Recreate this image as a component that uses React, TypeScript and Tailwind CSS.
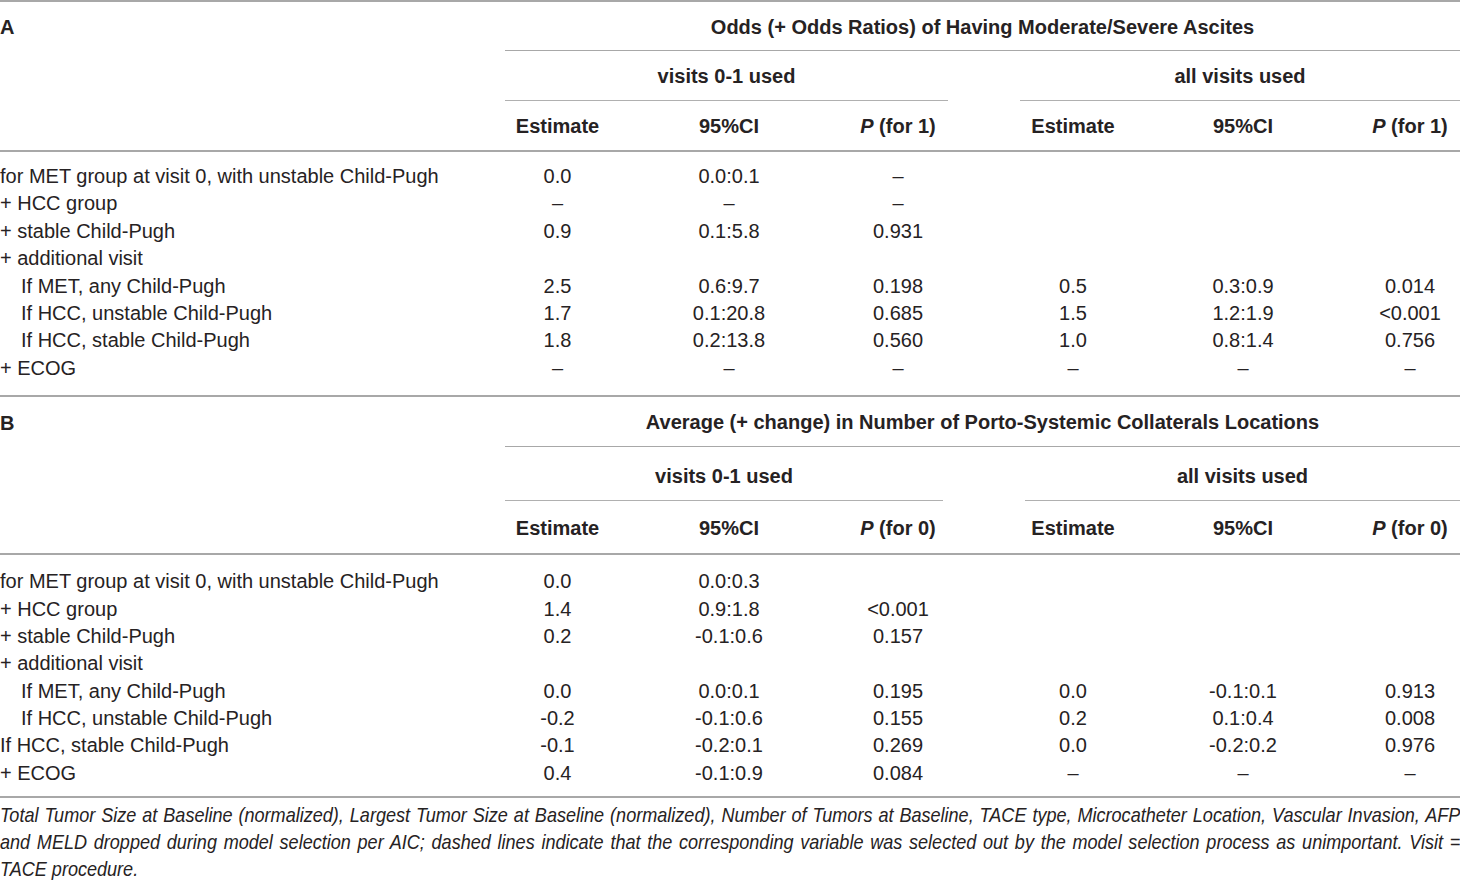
import React from 'react';

type Row = { label: string; indent?: boolean; cells: string[] };

const cols = 'grid grid-cols-[505px_105px_238px_100px_72px_106px_234px_100px]';

const rowsA: Row[] = [
  { label: 'for MET group at visit 0, with unstable Child-Pugh', cells: ['0.0', '0.0:0.1', '–', '', '', ''] },
  { label: '+ HCC group', cells: ['–', '–', '–', '', '', ''] },
  { label: '+ stable Child-Pugh', cells: ['0.9', '0.1:5.8', '0.931', '', '', ''] },
  { label: '+ additional visit', cells: ['', '', '', '', '', ''] },
  { label: 'If MET, any Child-Pugh', indent: true, cells: ['2.5', '0.6:9.7', '0.198', '0.5', '0.3:0.9', '0.014'] },
  { label: 'If HCC, unstable Child-Pugh', indent: true, cells: ['1.7', '0.1:20.8', '0.685', '1.5', '1.2:1.9', '<0.001'] },
  { label: 'If HCC, stable Child-Pugh', indent: true, cells: ['1.8', '0.2:13.8', '0.560', '1.0', '0.8:1.4', '0.756'] },
  { label: '+ ECOG', cells: ['–', '–', '–', '–', '–', '–'] },
];

const rowsB: Row[] = [
  { label: 'for MET group at visit 0, with unstable Child-Pugh', cells: ['0.0', '0.0:0.3', '', '', '', ''] },
  { label: '+ HCC group', cells: ['1.4', '0.9:1.8', '<0.001', '', '', ''] },
  { label: '+ stable Child-Pugh', cells: ['0.2', '-0.1:0.6', '0.157', '', '', ''] },
  { label: '+ additional visit', cells: ['', '', '', '', '', ''] },
  { label: 'If MET, any Child-Pugh', indent: true, cells: ['0.0', '0.0:0.1', '0.195', '0.0', '-0.1:0.1', '0.913'] },
  { label: 'If HCC, unstable Child-Pugh', indent: true, cells: ['-0.2', '-0.1:0.6', '0.155', '0.2', '0.1:0.4', '0.008'] },
  { label: 'If HCC, stable Child-Pugh', cells: ['-0.1', '-0.2:0.1', '0.269', '0.0', '-0.2:0.2', '0.976'] },
  { label: '+ ECOG', cells: ['0.4', '-0.1:0.9', '0.084', '–', '–', '–'] },
];

function Rule() {
  return <div className="h-[2px] w-full bg-[#a8a8a8]" />;
}

function Head({ text }: { text: string }) {
  if (text.startsWith('P ')) {
    return (
      <div className="text-center">
        <span className="italic">P</span> {text.slice(2)}
      </div>
    );
  }
  return <div className="text-center">{text}</div>;
}

function Section({
  letter,
  title,
  p,
  rows,
  b,
}: {
  letter: string;
  title: string;
  p: string;
  rows: Row[];
  b: boolean;
}) {
  const heads = ['Estimate', '95%CI', 'P ' + p];
  return (
    <div>
      <div className={`${cols} font-bold`}>
        <div className={`flex items-center pt-[1px] ${b ? 'h-[50px]' : 'h-[49px]'}`}>{letter}</div>
        <div className={`col-span-7 flex items-center justify-center border-b border-[#a8a8a8] pt-[1px] ${b ? 'h-[50px]' : 'h-[49px]'}`}>
          {title}
        </div>
        <div className={b ? 'h-[54px]' : 'h-[50px]'} />
        <div className={`col-span-3 flex items-center justify-center border-b border-[#b0b0b0] ${b ? 'mr-[5px] h-[54px] pt-[4px]' : 'h-[50px]'}`}>
          visits 0-1 used
        </div>
        <div />
        <div className={`col-span-3 flex items-center justify-center border-b border-[#b0b0b0] ${b ? 'ml-[5px] h-[54px] pt-[4px]' : 'h-[50px]'}`}>
          all visits used
        </div>
      </div>
      <div className={`${cols} items-center font-bold ${b ? 'h-[52px] pt-[2px]' : 'h-[49px] pt-[1px]'}`}>
        <div />
        {heads.map((h) => (
          <Head key={'a' + h} text={h} />
        ))}
        <div />
        {heads.map((h) => (
          <Head key={'b' + h} text={h} />
        ))}
      </div>
      <Rule />
      <div className={b ? 'pt-[13px] pb-[9px]' : 'pt-[11px] pb-[13px]'}>
        {rows.map((r, i) => (
          <div key={i} className={`${cols} h-[27.4px] items-center leading-[27.4px]`}>
            <div className={`whitespace-nowrap ${r.indent ? 'pl-[21px]' : ''}`}>{r.label}</div>
            {r.cells.slice(0, 3).map((c, j) => (
              <div key={j} className="text-center">
                {c}
              </div>
            ))}
            <div />
            {r.cells.slice(3).map((c, j) => (
              <div key={'r' + j} className="text-center">
                {c}
              </div>
            ))}
          </div>
        ))}
      </div>
      <Rule />
    </div>
  );
}

export default function App() {
  return (
    <div className="h-[880px] w-[1460px] overflow-hidden bg-white font-['Liberation_Sans',Arial,sans-serif] text-[20px] text-[#262223]">
      <Rule />
      <Section
        letter="A"
        title="Odds (+ Odds Ratios) of Having Moderate/Severe Ascites"
        p="(for 1)"
        rows={rowsA}
        b={false}
      />
      <Section
        letter="B"
        title="Average (+ change) in Number of Porto-Systemic Collaterals Locations"
        p="(for 0)"
        rows={rowsB}
        b={true}
      />
      <div className="w-[1460px] pt-[3px]">
        <div className="w-[1698px] origin-left scale-x-[0.86] text-[21px] italic leading-[27px]">
          <div className="text-justify [text-align-last:justify]">
            Total Tumor Size at Baseline (normalized), Largest Tumor Size at Baseline (normalized), Number of Tumors at
            Baseline, TACE type, Microcatheter Location, Vascular Invasion, AFP
          </div>
          <div className="text-justify [text-align-last:justify]">
            and MELD dropped during model selection per AIC; dashed lines indicate that the corresponding variable was
            selected out by the model selection process as unimportant. Visit =
          </div>
          <div>TACE procedure.</div>
        </div>
      </div>
    </div>
  );
}
